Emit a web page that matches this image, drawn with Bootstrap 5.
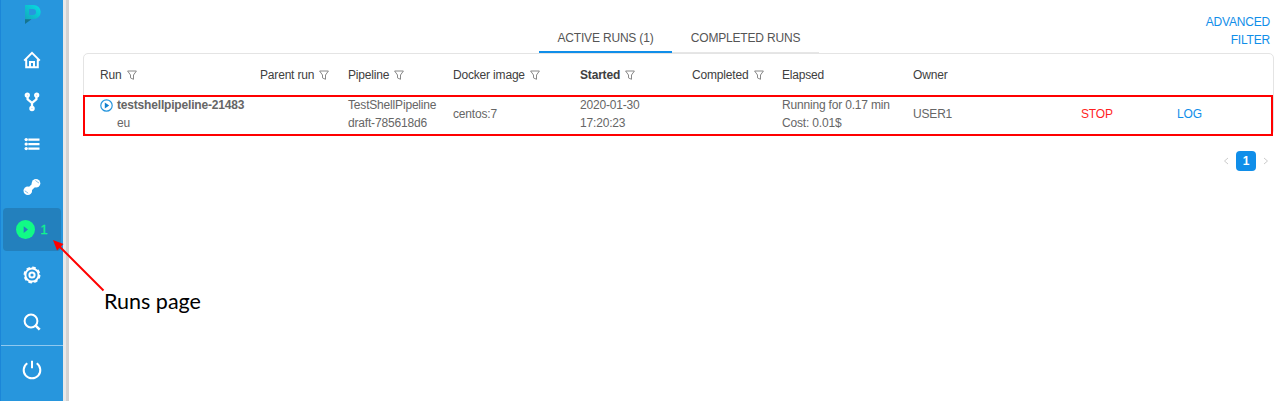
<!DOCTYPE html>
<html lang="en">
<head>
<meta charset="utf-8">
<meta name="viewport" content="width=device-width, initial-scale=1">
<title>Active runs</title>
<link href="https://cdn.jsdelivr.net/npm/bootstrap@5.3.0/dist/css/bootstrap.min.css" rel="stylesheet">
<style>
body{font-family:"Liberation Sans",Arial,sans-serif;font-size:12px;line-height:18px;letter-spacing:-.18px;color:#666;height:401px;overflow:hidden}
.side-menu{width:63px;background:#2796dd;border-left:1px solid #1b86d8}
.side-menu a{display:flex;align-items:center;justify-content:center;color:#fff;text-decoration:none}
.i-logo{height:38px;padding-top:1px;align-items:flex-start!important}
.i-home{height:43px}.i-fork,.i-list{height:42px}.i-tool{height:43px}
.i-runs{height:43px;margin:0 2px;background:#2380bd;border-radius:4px;color:#11f58c!important;gap:5px;font-size:13px;-webkit-text-stroke:.3px}
.i-gear{height:48px}.i-search{height:46px}.i-power{height:48px;border-top:1px solid #8fc8ef}
.splitter{width:6px;background:linear-gradient(90deg,#e8e8e8 50%,#d2d2d2 50%)}
.top-area{height:53px}
.run-tabs{margin-left:470px;width:280px;height:30px;margin-top:23px}
.run-tabs a{color:#555;text-decoration:none;line-height:31px;text-align:center;border-bottom:1px solid #e6e6e6}
.run-tabs a.active{width:133px;border-bottom:2px solid #108ee9}
.run-tabs a+a{width:147px}
.adv-filter{width:70px;margin:13px 10px 0 auto;text-align:right;color:#108ee9;text-decoration:none}
.runs-box{margin:0 6px 0 14px;height:82px;border:1px solid #e4e4e4;border-radius:5px;padding:0 8px;position:relative}
.runs-grid{table-layout:fixed;width:1173px;margin:0;color:#666}
.runs-grid th,.runs-grid td{padding:0 0 0 8px;vertical-align:middle;white-space:nowrap;font-weight:400;color:inherit;border:0;background:none}
.runs-grid th{height:41px;color:#404040;border-bottom:1px solid #e4e4e4;padding-top:2px}
.runs-grid td{height:38px}
.runs-grid svg.flt{margin-left:2px;vertical-align:-1px}
.red-frame{position:absolute;left:-1px;top:41px;width:1190px;height:41px;border:2px solid red}
.pager{margin:16px 11px 0 0;color:#ccc}
.pager .cur{width:20px;height:20px;border-radius:4px;background:#108ee9;color:#fff;line-height:20px;text-align:center;font-weight:700}
.note-arrow{position:absolute;left:50px;top:236px}
.note-text{position:absolute;left:104px;top:286px;font:21.5px/30px Lato,sans-serif;letter-spacing:0;color:#000;white-space:nowrap}
</style>
</head>
<body class="bg-white">
<svg width="0" height="0" class="position-absolute"><defs><symbol id="funnel" viewBox="0 0 10 10"><path d="M.6 1h8.8L6.5 5v4.3L3.5 7.9V5z" fill="none" stroke="#888" stroke-width="1"/></symbol></defs></svg>
<div class="d-flex h-100">
<nav class="side-menu flex-shrink-0 d-flex flex-column">
  <a href="#" class="i-logo"><svg width="18" height="24" viewBox="0 0 18 24"><defs><linearGradient id="lg" x1="1" x2="0" y1="0" y2="1"><stop offset="0" stop-color="#04e0e5"/><stop offset="1" stop-color="#14a5ba"/></linearGradient></defs><path fill-rule="evenodd" d="M2 4h8.5a7 6.8 0 0 1 0 14H8L2 20zM6 8v6h4a3 3 0 0 0 0-6z" fill="url(#lg)"/><path d="M2 18.2h6.5L2 23z" fill="#16758f"/></svg></a>
  <a href="#" class="i-home"><svg width="18" height="18" viewBox="0 0 18 18" fill="none" stroke="#fff" stroke-width="2"><path d="M1.2 9.6L9 1.8l7.8 7.8M3.2 8.5v7.8h11.6V8.5"/><path d="M7 16v-5h4v5" /></svg></a>
  <a href="#" class="i-fork"><svg width="18" height="20" viewBox="0 0 18 20" fill="none" stroke="#fff" stroke-width="2.3"><path d="M4.6 4v3.3L9 11l4.4-3.7V4M9 11v5"/><circle cx="4.3" cy="3.1" r="1.5"/><circle cx="13.7" cy="3.1" r="1.5"/><circle cx="9" cy="16.6" r="1.6"/></svg></a>
  <a href="#" class="i-list"><svg width="16" height="14" viewBox="0 0 16 14" fill="#fff"><path d="M4.3 1.5h11.2v2.3H4.3zM4.3 6h11.2v2.3H4.3zM4.3 10.5h11.2v2.3H4.3z"/><circle cx="2.2" cy="2.6" r="1.7"/><circle cx="2.2" cy="7.1" r="1.7"/><circle cx="2.2" cy="11.6" r="1.7"/></svg></a>
  <a href="#" class="i-tool"><svg width="18" height="18" viewBox="0 0 18 18"><path d="M5.5 12.5l7-7" stroke="#fff" stroke-width="4.4"/><circle cx="4.8" cy="12.8" r="4.3" fill="#fff"/><circle cx="13" cy="5.2" r="4.3" fill="#fff"/><path d="M1.8 12.8l3.4 2.4M12.4 2.5l3.6 2.6" stroke="#7fbfea" stroke-width="1"/></svg></a>
  <a href="#" class="i-runs"><svg width="19" height="19" viewBox="0 0 19 19"><circle cx="9.5" cy="9.5" r="9.5" fill="#11fa86"/><path d="M7.7 6.2l4.3 3.4-4.3 3.4z" fill="#2380bd"/></svg><span>1</span></a>
  <a href="#" class="i-gear"><svg width="18" height="18" viewBox="0 0 18 18" fill="none" stroke="#fff"><circle cx="9" cy="9" r="6.6" stroke-width="2"/><circle cx="9" cy="9" r="7.6" stroke-width="1.7" stroke-dasharray="3.6 2.369"/><circle cx="9" cy="9" r="2.6" stroke-width="2"/></svg></a>
  <a href="#" class="i-search"><svg width="18" height="18" viewBox="0 0 18 18" fill="none" stroke="#fff" stroke-width="2"><circle cx="8" cy="8" r="6.4"/><path d="M12.4 12.4l4.3 4.2" stroke-width="2.6"/></svg></a>
  <a href="#" class="i-power"><svg width="20" height="20" viewBox="0 0 20 20" fill="none" stroke="#fff" stroke-width="2"><path d="M5.3 3.2a8.3 8.3 0 1 0 9.4 0M10 .8v7.4"/></svg></a>
</nav>
<div class="splitter flex-shrink-0"></div>
<main class="flex-grow-1">
  <div class="top-area d-flex">
    <div class="run-tabs d-flex"><a href="#" class="active">ACTIVE RUNS (1)</a><a href="#">COMPLETED RUNS</a></div>
    <a href="#" class="adv-filter">ADVANCED FILTER</a>
  </div>
  <div class="runs-box">
    <table class="runs-grid table">
      <colgroup><col style="width:160px"><col style="width:88px"><col style="width:105px"><col style="width:127px"><col style="width:112px"><col style="width:90px"><col style="width:131px"><col style="width:168px"><col style="width:96px"><col></colgroup>
      <thead><tr>
        <th>Run <svg class="flt" width="10" height="10"><use href="#funnel"/></svg></th>
        <th>Parent run <svg class="flt" width="10" height="10"><use href="#funnel"/></svg></th>
        <th>Pipeline <svg class="flt" width="10" height="10"><use href="#funnel"/></svg></th>
        <th>Docker image <svg class="flt" width="10" height="10"><use href="#funnel"/></svg></th>
        <th><b>Started</b> <svg class="flt" width="10" height="10"><use href="#funnel"/></svg></th>
        <th>Completed <svg class="flt" width="10" height="10"><use href="#funnel"/></svg></th>
        <th>Elapsed</th><th>Owner</th><th></th><th></th>
      </tr></thead>
      <tbody><tr>
        <td><div class="d-flex"><svg width="13" height="13" viewBox="0 0 13 13" style="margin:3px 4px 0 0"><circle cx="6.5" cy="6.5" r="5.7" fill="none" stroke="#2796dd" stroke-width="1.2"/><path d="M4.8 3.4l4.4 3.1-4.4 3.1z" fill="#1080cf"/></svg><div><b>testshellpipeline-21483</b><br>eu</div></div></td>
        <td></td>
        <td>TestShellPipeline<br>draft-785618d6</td>
        <td>centos:7</td>
        <td>2020-01-30<br>17:20:23</td>
        <td></td>
        <td>Running for 0.17 min<br>Cost: 0.01$</td>
        <td>USER1</td>
        <td style="color:#ff1f1f">STOP</td>
        <td style="color:#108ee9">LOG</td>
      </tr></tbody>
    </table>
    <div class="red-frame"></div>
  </div>
  <div class="pager d-flex justify-content-end align-items-center">
    <svg width="6" height="8" viewBox="0 0 6 8" fill="none" stroke="#ccc"><path d="M5 1L1.5 4 5 7"/></svg>
    <span class="cur" style="margin:0 7px">1</span>
    <svg width="6" height="8" viewBox="0 0 6 8" fill="none" stroke="#ccc"><path d="M1 1l3.5 3L1 7"/></svg>
  </div>
</main>
</div>
<svg class="note-arrow" width="60" height="60"><path d="M53.5 54.5L8 9" stroke="red" stroke-width="2"/><path d="M3 4l10.5 4-6.5 6.5z" fill="red"/></svg>
<div class="note-text">Runs page</div>
<script src="https://cdn.jsdelivr.net/npm/bootstrap@5.3.0/dist/js/bootstrap.bundle.min.js"></script>
</body>
</html>
